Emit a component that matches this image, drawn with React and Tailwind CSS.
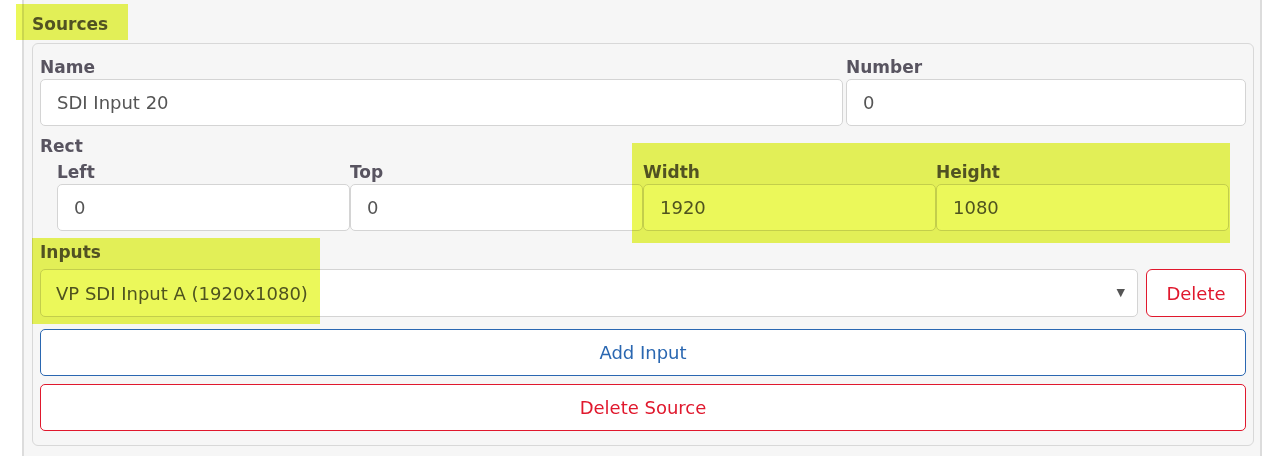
const rect = [
  { label: "Left", value: "0" },
  { label: "Top", value: "0" },
  { label: "Width", value: "1920" },
  { label: "Height", value: "1080" },
];

function Field({ label, value, className = "" }) {
  return (
    <div className={className}>
      <div className="text-[17px] font-bold leading-[22px] text-[#585460]">{label}</div>
      <div className="mt-[1px] h-[47px] rounded-[5px] border border-[#d4d4d4] bg-white px-4 flex items-center text-[18px] text-[#555]">
        {value}
      </div>
    </div>
  );
}

export default function App() {
  return (
    <div className="relative h-[456px] w-[1268px] overflow-hidden bg-white font-['DejaVu_Sans',sans-serif]">
      <div className="ml-[22px] h-full w-[1240px] border-x-2 border-[#dcdcdc] bg-[#f6f6f6] pl-[8px] pr-[6px] pt-[13px]">
        <div className="text-[17px] font-bold leading-[22px] text-[#585460]">Sources</div>
        <div className="mt-[8px] h-[403px] rounded-[6px] border border-[#d8d8d8] px-[7px] pt-[12px]">
          <div className="grid grid-cols-3 gap-[3px]">
            <Field label="Name" value="SDI Input 20" className="col-span-2" />
            <Field label="Number" value="0" />
          </div>
          <div className="mt-[9px] text-[17px] font-bold leading-[22px] text-[#585460]">Rect</div>
          <div className="mx-[17px] mt-[4px] grid grid-cols-4">
            {rect.map((r) => (
              <Field key={r.label} label={r.label} value={r.value} />
            ))}
          </div>
          <div className="mt-[10px] text-[17px] font-bold leading-[22px] text-[#585460]">Inputs</div>
          <div className="mt-[6px] flex gap-2">
            <div className="flex h-[48px] flex-1 items-center justify-between rounded-[5px] border border-[#d4d4d4] bg-white pl-[15px] pr-[12px] text-[18px] text-[#555]">
              <span>VP SDI Input A (1920x1080)</span>
              <span className="text-[11px] text-[#555]">▼</span>
            </div>
            <button className="h-[48px] w-[100px] rounded-[6px] border border-[#e0182d] bg-white text-[18px] text-[#e0182d]">
              Delete
            </button>
          </div>
          <button className="mt-[12px] h-[47px] w-full rounded-[5px] border border-[#2a67b1] bg-white text-[18px] text-[#2a67b1]">
            Add Input
          </button>
          <button className="mt-[8px] h-[47px] w-full rounded-[5px] border border-[#e0182d] bg-white text-[18px] text-[#e0182d]">
            Delete Source
          </button>
        </div>
      </div>
      {/* highlight marks laid over the form */}
      <div className="pointer-events-none absolute left-[16px] top-[4px] h-[36px] w-[112px] bg-[#ebf85a] mix-blend-multiply" />
      <div className="pointer-events-none absolute left-[632px] top-[143px] h-[100px] w-[598px] bg-[#ebf85a] mix-blend-multiply" />
      <div className="pointer-events-none absolute left-[32px] top-[238px] h-[86px] w-[288px] bg-[#ebf85a] mix-blend-multiply" />
    </div>
  );
}
